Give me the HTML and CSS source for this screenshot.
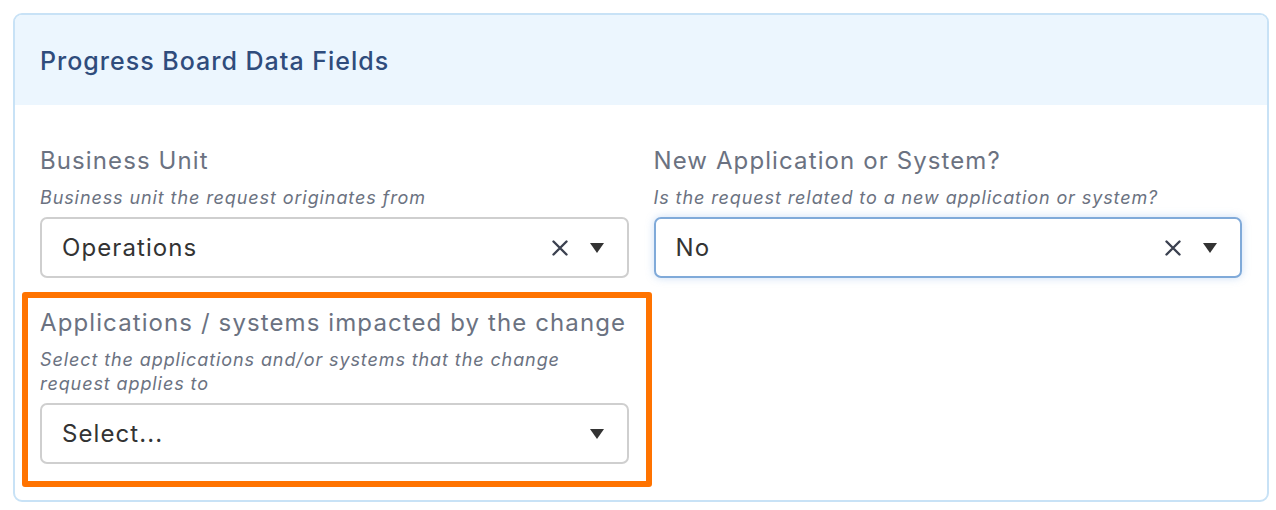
FILE: index.html
```html
<!DOCTYPE html>
<html lang="en">
<head>
<meta charset="utf-8">
<title>Progress Board Data Fields</title>
<link rel="stylesheet" href="styles.css">
</head>
<body>
<section class="card">
  <header class="card-header">
    <h2 class="card-title">Progress Board Data Fields</h2>
  </header>
  <div class="card-body">
    <div class="field">
      <div class="field-label">Business Unit</div>
      <div class="field-desc">Business unit the request originates from</div>
      <div class="select">
        <span class="select-value">Operations</span>
        <span class="select-icons">
          <svg class="icon-clear" width="18" height="18" viewBox="0 0 18 18"><path d="M2.5 2.5 L15.5 15.5 M15.5 2.5 L2.5 15.5" stroke="#3b4150" stroke-width="2.4" stroke-linecap="round"/></svg>
          <svg class="icon-caret" width="16" height="12" viewBox="0 0 16 12"><path d="M1 1 H15 L8 11 Z" fill="#333"/></svg>
        </span>
      </div>
    </div>
    <div class="field">
      <div class="field-label">New Application or System?</div>
      <div class="field-desc">Is the request related to a new application or system?</div>
      <div class="select select-focus">
        <span class="select-value">No</span>
        <span class="select-icons">
          <svg class="icon-clear" width="18" height="18" viewBox="0 0 18 18"><path d="M2.5 2.5 L15.5 15.5 M15.5 2.5 L2.5 15.5" stroke="#3b4150" stroke-width="2.4" stroke-linecap="round"/></svg>
          <svg class="icon-caret" width="16" height="12" viewBox="0 0 16 12"><path d="M1 1 H15 L8 11 Z" fill="#333"/></svg>
        </span>
      </div>
    </div>
    <div class="field field-highlight">
      <div class="field-label">Applications / systems impacted by the change</div>
      <div class="field-desc">Select the applications and/or systems that the change request applies to</div>
      <div class="select">
        <span class="select-value">Select...</span>
        <span class="select-icons">
          <svg class="icon-caret" width="16" height="12" viewBox="0 0 16 12"><path d="M1 1 H15 L8 11 Z" fill="#333"/></svg>
        </span>
      </div>
    </div>
  </div>
</section>
</body>
</html>
```
FILE: styles.css
```css
* { box-sizing: border-box; }

html, body {
  margin: 0;
  padding: 0;
  background: #ffffff;
  font-family: Inter, "Noto Sans", "Liberation Sans", sans-serif;
}

.card {
  margin: 13px 7px 0 13px;
  width: 1256px;
  height: 489px;
  border: 2px solid #c8e2f6;
  border-radius: 9px;
  overflow: hidden;
  background: #ffffff;
}

.card-header {
  height: 90px;
  background: #ecf6fe;
  display: flex;
  align-items: center;
  padding: 0 25px;
}

.card-title {
  margin: 0;
  font-size: 25px;
  font-weight: 500;
  letter-spacing: 0.04em;
  color: #2f4c7c;
  line-height: 32px;
  padding-top: 2px;
}

.card-body {
  padding: 40px 25px 36px 25px;
  display: grid;
  grid-template-columns: 1fr 1fr;
  column-gap: 25px;
  row-gap: 29px;
}

.field {
  display: flex;
  flex-direction: column;
  min-width: 0;
}

.field-label {
  font-size: 24px;
  line-height: 32px;
  letter-spacing: 0.046em;
  white-space: nowrap;
  color: #6b7281;
  font-weight: 400;
}

.field-desc {
  margin-top: 9px;
  font-size: 18px;
  line-height: 24px;
  letter-spacing: 0.05em;
  font-style: italic;
  color: #6b7281;
}

.select {
  margin-top: 7px;
  height: 61px;
  border: 2px solid #cfcfcf;
  border-radius: 7px;
  display: flex;
  align-items: center;
  justify-content: space-between;
  padding: 0 22px 0 20px;
  background: #ffffff;
}

.select-focus {
  border-color: #80aad9;
  box-shadow: 0 0 8px rgba(110, 160, 225, 0.35);
}

.select-value {
  font-size: 24px;
  color: #333333;
  letter-spacing: 0.045em;
  line-height: 32px;
}

.select-icons {
  display: flex;
  align-items: center;
  gap: 20px;
}

.icon-clear { display: block; }
.icon-caret { display: block; margin-top: 1px; }

.field-highlight {
  position: relative;
}

.field-highlight::after {
  content: "";
  position: absolute;
  top: -15px;
  left: -18px;
  right: -23px;
  bottom: -23px;
  border: 6px solid #ff7300;
  border-radius: 3px;
  pointer-events: none;
}
```
